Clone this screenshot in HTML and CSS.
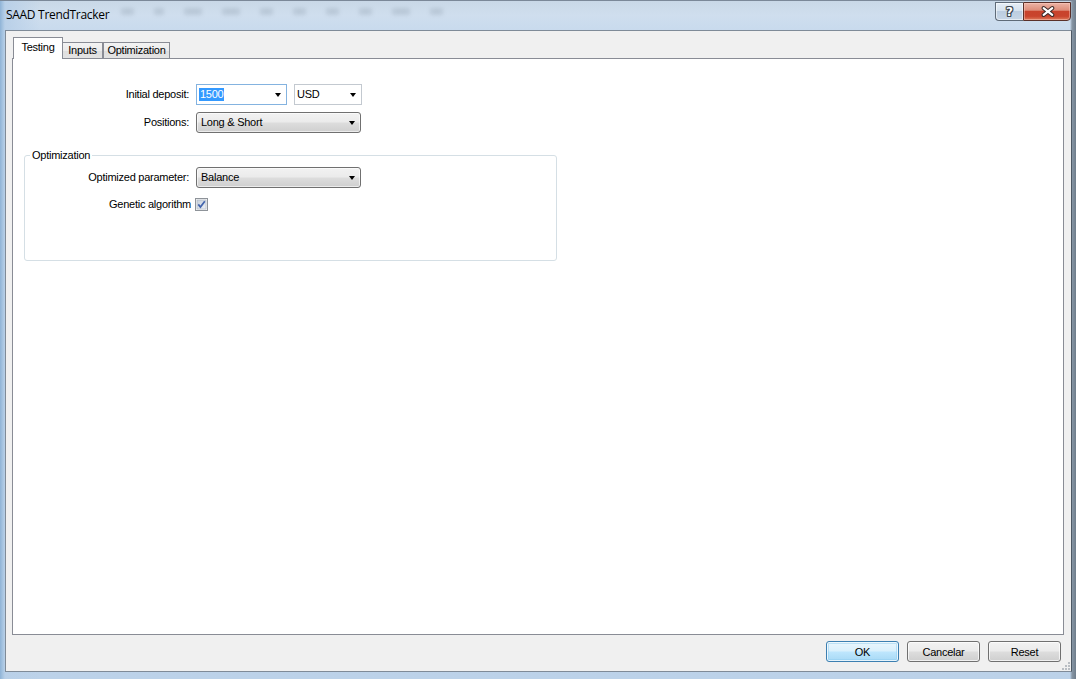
FILE: index.html
```html
<!DOCTYPE html>
<html>
<head>
<meta charset="utf-8">
<title>SAAD TrendTracker</title>
<link rel="stylesheet" href="styles.css">
</head>
<body>
<div class="window">
  <div class="titlebar">
    <div class="title">SAAD TrendTracker</div>
    <div class="blur-icons">
      <span class="bi w12"></span><span class="bi w10"></span><span class="bi w16"></span><span class="bi w16"></span><span class="bi w12"></span><span class="bi w12"></span><span class="bi w12"></span><span class="bi w12"></span><span class="bi w16"></span><span class="bi w12"></span>
    </div>
    <div class="caption-buttons">
      <div class="cap-btn help"><span class="qmark">?</span></div>
      <div class="cap-btn close">
        <svg width="48" height="19" viewBox="0 0 48 19">
          <path d="M20.5 6 L29.5 13 M29.5 6 L20.5 13" stroke="#3a2a28" stroke-width="4.4" stroke-linecap="round"/>
          <path d="M20.5 6 L29.5 13 M29.5 6 L20.5 13" stroke="#ffffff" stroke-width="2.2" stroke-linecap="round"/>
        </svg>
      </div>
    </div>
  </div>

  <div class="client">
    <div class="tabs">
      <div class="tab active">Testing</div>
      <div class="tab t-inputs">Inputs</div>
      <div class="tab t-opt">Optimization</div>
    </div>

    <div class="panel">
      <div class="form">
        <div class="lbl">Initial deposit:</div>
        <div class="ctrls">
          <div class="combo edit focus w-deposit"><span class="sel">1500</span><span class="arrow"></span></div>
          <div class="combo edit w-cur"><span class="val">USD</span><span class="arrow"></span></div>
        </div>
        <div class="lbl">Positions:</div>
        <div class="ctrls">
          <div class="combo drop w-wide"><span class="val">Long &amp; Short</span><span class="arrow"></span></div>
        </div>
      </div>

      <fieldset class="group">
        <legend>Optimization</legend>
        <div class="group-form">
          <div class="lbl">Optimized parameter:</div>
          <div class="ctrls">
            <div class="combo drop w-wide"><span class="val">Balance</span><span class="arrow"></span></div>
          </div>
          <div class="check-row">
            <span class="check-lbl">Genetic algorithm</span>
            <svg class="checkbox" width="13" height="13" viewBox="0 0 13 13">
              <defs>
                <linearGradient id="cbg" x1="0" y1="0" x2="1" y2="1">
                  <stop offset="0" stop-color="#c6cfdb"/>
                  <stop offset="1" stop-color="#eef1f5"/>
                </linearGradient>
              </defs>
              <rect x="0.5" y="0.5" width="12" height="12" fill="#f4f4f4" stroke="#8e9399"/>
              <rect x="2" y="2" width="9" height="9" fill="url(#cbg)" stroke="#a9b3c0" stroke-width="0.6"/>
              <path d="M3.3 6.4 L5.4 9 L9.8 3.2" fill="none" stroke="#4264ad" stroke-width="1.7"/>
            </svg>
          </div>
        </div>
      </fieldset>
    </div>

    <div class="buttons">
      <button class="btn default">OK</button>
      <button class="btn">Cancelar</button>
      <button class="btn">Reset</button>
    </div>

    <svg class="grip" width="9" height="9" viewBox="0 0 9 9">
      <g fill="#b9bec4">
        <rect x="7" y="1" width="2" height="2"/>
        <rect x="4" y="4" width="2" height="2"/><rect x="7" y="4" width="2" height="2"/>
        <rect x="1" y="7" width="2" height="2"/><rect x="4" y="7" width="2" height="2"/><rect x="7" y="7" width="2" height="2"/>
      </g>
    </svg>
  </div>
</div>
</body>
</html>
```

FILE: styles.css
```css
html, body {
  margin: 0;
  padding: 0;
}

body {
  width: 1076px;
  height: 679px;
  overflow: hidden;
  font-family: "Liberation Sans", Arial, sans-serif;
  font-size: 11px;
  letter-spacing: -0.25px;
  color: #000;
}

.window {
  box-sizing: border-box;
  width: 1076px;
  height: 679px;
  display: flex;
  flex-direction: column;
  border-top: 1px solid #7b8898;
  background:
    linear-gradient(to right, #8fb3d6 0px, #a9c6e2 3px, #b9d0e8 5px, rgba(196,216,236,0) 40px),
    linear-gradient(to left, #6f7d8b 0px, #8796a5 4px, rgba(196,216,236,0) 6px),
    linear-gradient(to bottom, #c9d8e7 0px, #cfdeee 14px, #c8daed 30px, #bcd2e9 100%);
}

/* ---------- title bar ---------- */
.titlebar {
  height: 29px;
  flex: none;
  display: flex;
  align-items: flex-start;
  position: relative;
}

.title {
  font-family: "Open Sans", "Noto Sans", sans-serif;
  font-size: 12px;
  line-height: 28px;
  padding-left: 6px;
  letter-spacing: -0.3px;
  color: #000;
}

.blur-icons {
  display: flex;
  gap: 20px;
  margin-left: 12px;
  margin-top: 7px;
  filter: blur(2px);
  opacity: 0.18;
}

.bi {
  display: block;
  height: 7px;
  background: #5d6c7c;
  border-radius: 2px;
}
.w10 { width: 10px; }
.w12 { width: 13px; }
.w16 { width: 18px; }

.caption-buttons {
  margin-left: auto;
  margin-top: 1px;
  margin-right: 5px;
  display: flex;
}

.cap-btn {
  box-sizing: border-box;
  height: 19px;
  border: 1px solid #5f6b78;
  display: flex;
  align-items: center;
  justify-content: center;
}

.help {
  width: 28px;
  border-right: none;
  border-radius: 0 0 0 4px;
  background: linear-gradient(to bottom, #e6eef6 0%, #d6e2ee 45%, #bccde0 50%, #c7d6e6 100%);
  box-shadow: inset 0 0 0 1px rgba(255,255,255,0.55);
}

.qmark {
  font-family: "DejaVu Sans", sans-serif;
  font-weight: bold;
  font-size: 12px;
  line-height: 12px;
  letter-spacing: 0;
  color: #fff;
  margin-top: 1px;
  text-shadow:
    1px 0 0 #3d4650, -1px 0 0 #3d4650, 0 1px 0 #3d4650, 0 -1px 0 #3d4650,
    1px 1px 0 #3d4650, -1px -1px 0 #3d4650, 1px -1px 0 #3d4650, -1px 1px 0 #3d4650;
}

.close {
  width: 48px;
  border-color: #5a3029;
  border-radius: 0 0 4px 0;
  background: linear-gradient(to bottom, #ecb3a5 0%, #de8e7b 42%, #c8432c 50%, #c9442d 78%, #de7a5b 100%);
  box-shadow: inset 0 0 0 1px rgba(255,210,200,0.45);
}

.close svg {
  display: block;
}

/* ---------- client area ---------- */
.client {
  position: relative;
  flex: 1;
  margin: 0 4px 7px 5px;
  border: 1px solid #7f8b98;
  border-right-color: #4d5864;
  background: #f0f0f0;
  padding: 6px 7px 9px 6px;
  display: flex;
  flex-direction: column;
}

/* ---------- tabs ---------- */
.tabs {
  display: flex;
  align-items: flex-end;
  height: 21px;
  padding-left: 1px;
  position: relative;
  z-index: 1;
}

.tab {
  box-sizing: border-box;
  text-align: center;
  line-height: 13px;
  border: 1px solid #898c95;
  border-bottom: none;
}

.tab.active {
  width: 50px;
  height: 22px;
  margin-bottom: -1px;
  padding-top: 3px;
  background: #fff;
}

.t-inputs,
.t-opt {
  height: 16px;
  padding-top: 1px;
  background: linear-gradient(to bottom, #f3f3f3 0%, #ebebeb 50%, #dedede 51%, #e3e3e3 100%);
}

.t-inputs {
  width: 40px;
  border-left: none;
}

.t-opt {
  width: 67px;
}

/* ---------- panel ---------- */
.panel {
  box-sizing: border-box;
  height: 577px;
  flex: none;
  background: #fff;
  border: 1px solid #898c95;
  padding: 25px 0 0 0;
}

.form {
  display: grid;
  grid-template-columns: 176px auto;
  column-gap: 7px;
  row-gap: 7px;
  align-items: center;
  justify-items: start;
}

.lbl {
  justify-self: end;
  white-space: nowrap;
  line-height: 13px;
}

.ctrls {
  display: flex;
  gap: 7px;
}

.combo {
  box-sizing: border-box;
  height: 21px;
  display: flex;
  align-items: center;
  position: relative;
  line-height: 13px;
}

.combo .arrow {
  margin-left: auto;
  width: 0;
  height: 0;
  border-left: 3.5px solid transparent;
  border-right: 3.5px solid transparent;
  border-top: 4px solid #000;
}

.combo.edit {
  border: 1px solid #c3c9d0;
  background: #fff;
  padding-left: 2px;
}

.combo.edit.focus {
  border-color: #84b3e0;
}

.combo.edit .arrow {
  margin-right: 5px;
}

.combo.drop {
  border: 1px solid #707070;
  border-radius: 3px;
  padding-left: 4px;
  background: linear-gradient(to bottom, #f2f2f2 0%, #ebebeb 48%, #dddddd 52%, #cfcfcf 100%);
  box-shadow: inset 0 0 0 1px rgba(255,255,255,0.6);
}

.combo.drop .arrow {
  margin-right: 5px;
}

.sel {
  background: #3399ff;
  color: #fff;
  padding: 0 1px;
  line-height: 13px;
}

.w-deposit { width: 91px; }
.w-cur { width: 68px; }
.w-wide { width: 165px; }

/* ---------- group box ---------- */
.group {
  margin: 16px 0 0 11px;
  width: 533px;
  box-sizing: border-box;
  border: 1px solid #d5dfe5;
  border-radius: 3px;
  padding: 5px 0 49px 5px;
  min-width: 0;
}

.group legend {
  padding: 0 2px;
  line-height: 13px;
}

.group-form {
  display: grid;
  grid-template-columns: 159px auto;
  column-gap: 7px;
  row-gap: 10px;
  align-items: center;
  justify-items: start;
}

.check-row {
  grid-column: 1 / span 2;
  display: flex;
  align-items: center;
}

.check-lbl {
  box-sizing: border-box;
  width: 161px;
  text-align: right;
  line-height: 13px;
}

.checkbox {
  display: block;
  margin-left: 4px;
}

/* ---------- buttons ---------- */
.buttons {
  display: flex;
  justify-content: flex-end;
  gap: 8px;
  margin-top: 6px;
  padding-right: 3px;
}

.btn {
  box-sizing: border-box;
  width: 73px;
  height: 21px;
  margin: 0;
  padding: 0;
  font-family: "Liberation Sans", Arial, sans-serif;
  font-size: 11px;
  letter-spacing: -0.25px;
  color: #000;
  border: 1px solid #707070;
  border-radius: 3px;
  background: linear-gradient(to bottom, #f2f2f2 0%, #ebebeb 48%, #dddddd 52%, #cfcfcf 100%);
  box-shadow: inset 0 0 0 1px rgba(255,255,255,0.7);
}

.btn.default {
  border-color: #3c7fb1;
  background: linear-gradient(to bottom, #eaf6fd 0%, #d9f0fc 48%, #bee6fd 52%, #a7d9f5 100%);
  box-shadow: inset 0 0 0 1px rgba(255,255,255,0.75), inset 0 0 0 2px rgba(145,205,240,0.5);
}

.grip {
  position: absolute;
  right: 1px;
  bottom: 1px;
  display: block;
}
```
